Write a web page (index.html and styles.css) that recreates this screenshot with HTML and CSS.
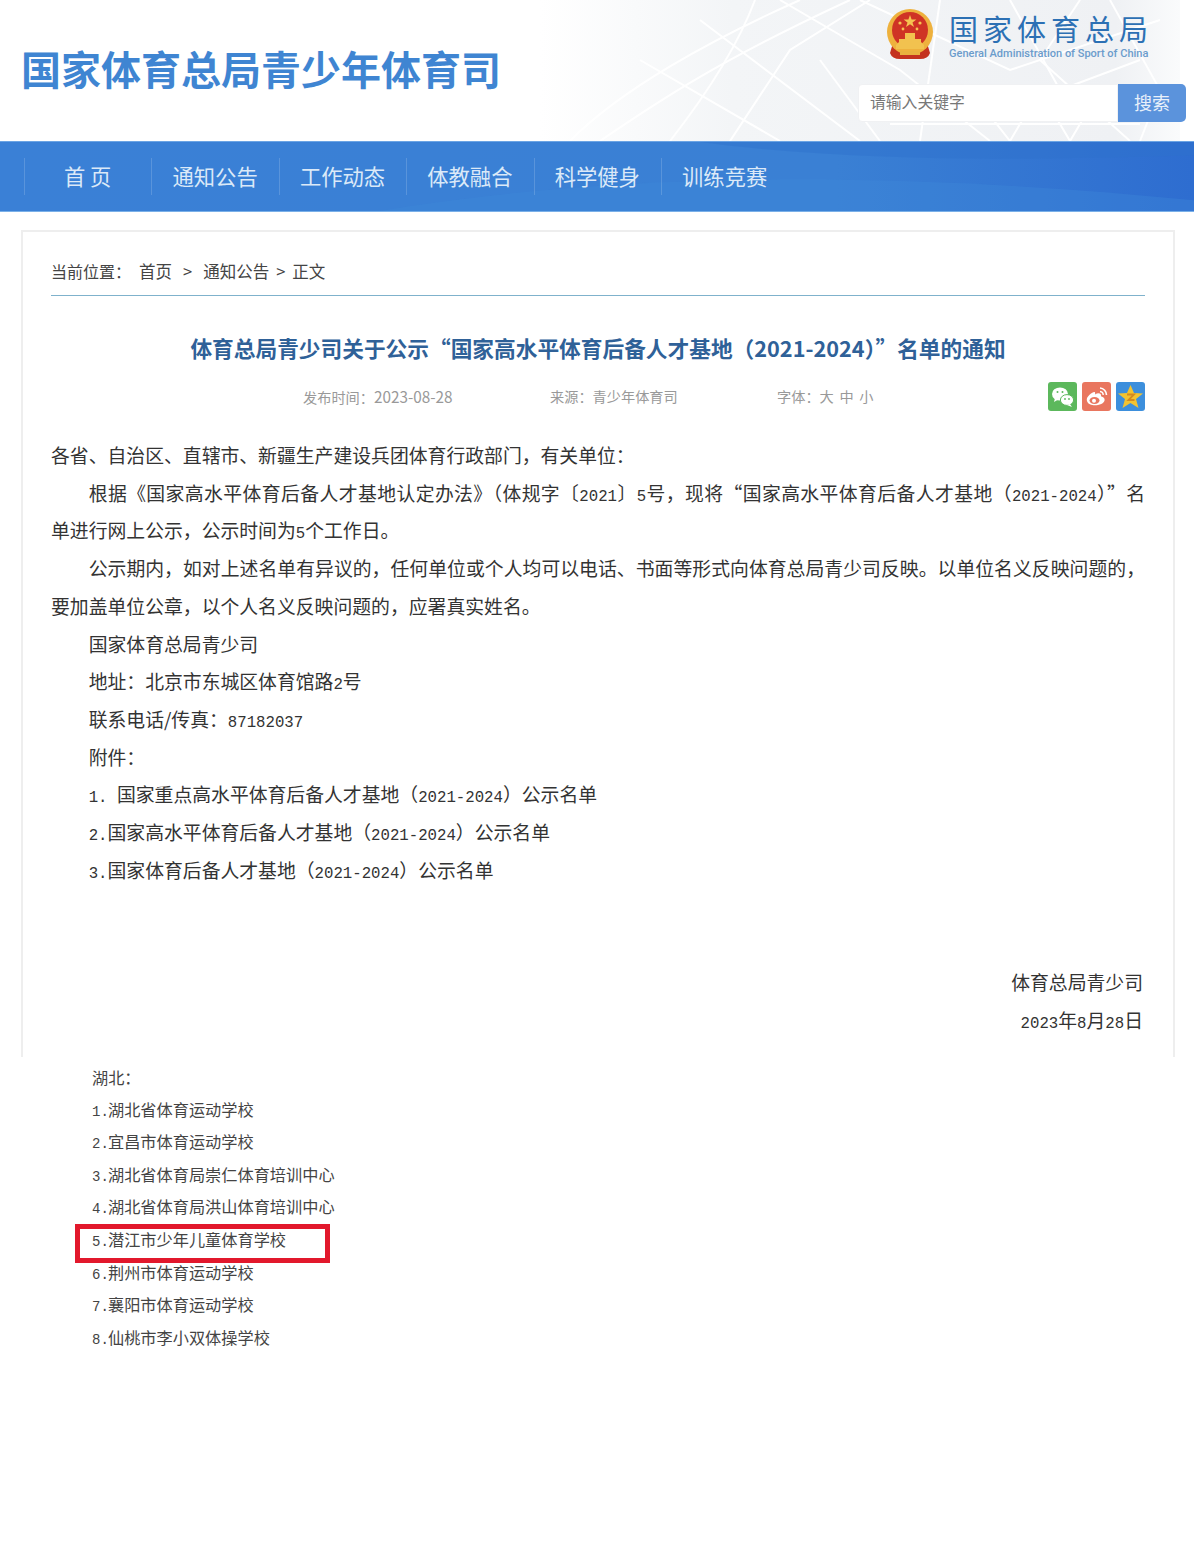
FILE: index.html
```html
<!DOCTYPE html>
<html lang="zh-CN">
<head>
    <meta charset="UTF-8">
    <meta name="viewport" content="width=device-width, initial-scale=1.0">
    <title>国家体育总局青少年体育司</title>
    <link rel="stylesheet" href="styles.css">
</head>
<body>
    <header class="header">
        <svg class="header-bg" viewBox="0 0 640 141" width="640" height="141" aria-hidden="true">
            <defs>
                <linearGradient id="fade" x1="0" x2="1" y1="0" y2="0">
                    <stop offset="0" stop-color="#f3f5f7" stop-opacity="0"/>
                    <stop offset="0.3" stop-color="#f3f5f7"/>
                    <stop offset="0.9" stop-color="#eff1f4"/>
                    <stop offset="1" stop-color="#fafbfc"/>
                </linearGradient>
            </defs>
            <rect width="640" height="141" fill="url(#fade)"/>
            <g fill="none" stroke="#fff" stroke-width="2">
                <path d="M30 141 C80 90 170 40 260 0"/>
                <path d="M60 141 C120 100 180 60 310 0"/>
                <path d="M130 141 C170 90 200 40 215 0"/>
                <path d="M190 141 L250 50 L330 0"/>
                <path d="M100 60 L240 141"/>
                <path d="M160 20 L320 141"/>
                <path d="M240 0 L360 70 L450 141"/>
                <path d="M280 60 L340 141"/>
                <path d="M400 0 L380 141"/>
                <path d="M430 90 L470 141 L500 90 L530 141 L560 90"/>
                <path d="M470 0 L520 90 L600 60"/>
                <path d="M540 0 L500 60 L590 141"/>
                <path d="M570 0 L620 90 L600 141"/>
                <path d="M320 0 L470 70 L620 20"/>
                <path d="M350 124 L600 124"/>
            </g>
        </svg>
        <h1 class="site-title">国家体育总局青少年体育司</h1>
        <div class="header-right">
            <div class="brand">
                <svg class="emblem" viewBox="0 0 48 50" width="48" height="50" aria-hidden="true">
                    <path d="M7 34 L4 44 Q6 50 14 50 L34 50 Q42 50 44 44 L41 34 Z" fill="#c4321f"/>
                    <circle cx="24" cy="23" r="23" fill="#eeb13d"/>
                    <circle cx="24" cy="21" r="18" fill="#cf3325"/>
                    <path d="M24 6 l1.6 4.6 4.8 0 -3.9 2.9 1.5 4.6 -4-2.8 -4 2.8 1.5-4.6 -3.9-2.9 4.8 0z" fill="#f5c451"/>
                    <circle cx="14" cy="14" r="1.6" fill="#f5c451"/>
                    <circle cx="34" cy="14" r="1.6" fill="#f5c451"/>
                    <circle cx="17" cy="20" r="1.4" fill="#f5c451"/>
                    <circle cx="31" cy="20" r="1.4" fill="#f5c451"/>
                    <path d="M13 30 L35 30 L35 33 L38 36 L38 40 L10 40 L10 36 L13 33 Z" fill="#f2c24f"/>
                    <path d="M19 24 H29 V30 H19 Z" fill="#f2c24f"/>
                    <path d="M14 42 H34 V46 H14 Z" fill="#e9b13f"/>
                </svg>
                <div class="brand-text">
                    <div class="brand-cn">国家体育总局</div>
                    <div class="brand-en">General Administration of Sport of China</div>
                </div>
            </div>
            <form class="search">
                <div class="search-input">请输入关键字</div>
                <div class="search-btn">搜索</div>
            </form>
        </div>
    </header>

    <nav class="nav">
        <svg class="nav-bg" viewBox="0 0 1194 71" width="1194" height="69" preserveAspectRatio="none" aria-hidden="true">
            <path d="M380 71 C620 30 900 30 1194 60 V71 Z" fill="#3f8ada" opacity="0.35"/>
            <path d="M700 0 C860 22 1040 18 1194 14 V0 Z" fill="#2f72cc" opacity="0.45"/>
        </svg>
        <a class="nav-item">首&nbsp;页</a>
        <a class="nav-item">通知公告</a>
        <a class="nav-item">工作动态</a>
        <a class="nav-item">体教融合</a>
        <a class="nav-item">科学健身</a>
        <a class="nav-item">训练竞赛</a>
    </nav>

    <main class="card">
        <div class="crumb">
            <span class="crumb-label">当前位置&#xFF1A;</span>
            <span>首页</span>
            <span class="crumb-arrow">&gt;</span>
            <span>通知公告</span>
            <span class="crumb-arrow tight">&gt;</span>
            <span>正文</span>
        </div>
        <h2 class="article-title">体育总局青少司关于公示&#x201C;国家高水平体育后备人才基地&#xFF08;2021-2024&#xFF09;&#x201D;名单的通知</h2>
        <div class="meta">
            <span class="meta-date">发布时间&#xFF1A;<span class="meta-num">2023-08-28</span></span>
            <span class="meta-source">来源&#xFF1A;青少年体育司</span>
            <span class="meta-font">字体&#xFF1A;大 中 小</span>
            <div class="share">
                <svg class="share-icon" viewBox="0 0 29 29" aria-hidden="true">
                    <rect width="29" height="29" rx="3" fill="#5cb85c"/>
                    <ellipse cx="12" cy="12" rx="8" ry="6.6" fill="#fff"/>
                    <path d="M7 16 L6 20 L11 17 Z" fill="#fff"/>
                    <ellipse cx="19" cy="18" rx="6.6" ry="5.4" stroke="#5cb85c" fill="#fff"/>
                    <path d="M22 22 L24 25 L19 23 Z" fill="#fff"/>
                    <circle cx="9.5" cy="10" r="1" fill="#5cb85c"/>
                    <circle cx="14.5" cy="10" r="1" fill="#5cb85c"/>
                    <circle cx="17" cy="17" r="0.9" fill="#5cb85c"/>
                    <circle cx="21" cy="17" r="0.9" fill="#5cb85c"/>
                </svg>
                <svg class="share-icon" viewBox="0 0 29 29" aria-hidden="true">
                    <rect width="29" height="29" rx="3" fill="#e9765f"/>
                    <path d="M12 10 C7 12 4 16 5 19 C6 23 12 24 16 23 C21 22 24 19 22 16 C21 14.500 19 15 19 14 C19.500 11 16 10.500 13 12.500 C13.500 10.500 13 10 12 10 Z" fill="#fff"/>
                    <ellipse cx="12.500" cy="18.500" rx="5" ry="3.500" fill="#e9765f"/>
                    <circle cx="12" cy="18.800" r="2" fill="#fff"/>
                    <path d="M18 6 A7 7 0 0 1 24.500 13" fill="none" stroke="#fff" stroke-width="1.600"/>
                    <path d="M18 9.500 A3.500 3.500 0 0 1 21.200 13" fill="none" stroke="#fff" stroke-width="1.400"/>
                </svg>
                <svg class="share-icon" viewBox="0 0 29 29" aria-hidden="true">
                    <rect width="29" height="29" rx="3" fill="#3d8fdc"/>
                    <path d="M14.500 3 L18 11 L27 11.500 L20 17 L22.500 26 L14.500 21 L6.500 26 L9 17 L2 11.500 L11 11 Z" fill="#f3c331"/>
                    <path d="M11 12.500 H18 L12.500 18 H18.500" fill="none" stroke="#d58a1f" stroke-width="1.800"/>
                </svg>
            </div>
        </div>
        <div class="content">
            <p class="flush">各省、自治区、直辖市、新疆生产建设兵团体育行政部门&#xFF0C;有关单位&#xFF1A;</p>
            <p class="fit">根据《国家高水平体育后备人才基地认定办法》&#xFF08;体规字〔<span class="num">2021</span>〕<span class="num">5</span>号&#xFF0C;现将&#x201C;国家高水平体育后备人才基地&#xFF08;<span class="num">2021-2024</span>&#xFF09;&#x201D;名</p>
            <p class="flush">单进行网上公示&#xFF0C;公示时间为<span class="num">5</span>个工作日。</p>
            <p>公示期内&#xFF0C;如对上述名单有异议的&#xFF0C;任何单位或个人均可以电话、书面等形式向体育总局青少司反映。以单位名义反映问题的&#xFF0C;要加盖单位公章&#xFF0C;以个人名义反映问题的&#xFF0C;应署真实姓名。</p>
            <p>国家体育总局青少司</p>
            <p>地址&#xFF1A;北京市东城区体育馆路<span class="num">2</span>号</p>
            <p>联系电话/传真&#xFF1A;<span class="num">87182037</span></p>
            <p>附件&#xFF1A;</p>
            <p><span class="num">1. </span> 国家重点高水平体育后备人才基地&#xFF08;<span class="num">2021-2024</span>&#xFF09;公示名单</p>
            <p><span class="num">2.</span>国家高水平体育后备人才基地&#xFF08;<span class="num">2021-2024</span>&#xFF09;公示名单</p>
            <p><span class="num">3.</span>国家体育后备人才基地&#xFF08;<span class="num">2021-2024</span>&#xFF09;公示名单</p>
            <p class="sign sign-first">体育总局青少司</p>
            <p class="sign"><span class="num">2023</span>年<span class="num">8</span>月<span class="num">28</span>日</p>
        </div>
    </main>

    <ul class="school-list">
        <li>湖北&#xFF1A;</li>
        <li><span class="idx">1.</span>湖北省体育运动学校</li>
        <li><span class="idx">2.</span>宜昌市体育运动学校</li>
        <li><span class="idx">3.</span>湖北省体育局崇仁体育培训中心</li>
        <li><span class="idx">4.</span>湖北省体育局洪山体育培训中心</li>
        <li class="marked"><span class="idx">5.</span>潜江市少年儿童体育学校<span class="red-box"></span></li>
        <li><span class="idx">6.</span>荆州市体育运动学校</li>
        <li><span class="idx">7.</span>襄阳市体育运动学校</li>
        <li><span class="idx">8.</span>仙桃市李小双体操学校</li>
    </ul>
</body>
</html>
```

FILE: styles.css
```css
* {
    box-sizing: border-box;
}
body {
    margin: 0;
    width: 1200px;
    height: 1564px;
    overflow: hidden;
    background: white;
    color: #333;
    font-family: "Noto Sans CJK SC", "Liberation Sans", sans-serif;
}

/* header */
.header {
    position: relative;
    height: 141px;
    display: flex;
    justify-content: space-between;
    padding: 0 14px 0 21px;
}
.header-bg {
    position: absolute;
    top: 0;
    left: 540px;
}
.site-title {
    position: relative;
    margin: 43px 0 0;
    font-size: 40px;
    line-height: 50px;
    font-weight: 700;
    color: #3f85d2;
}
.header-right {
    position: relative;
    width: 328px;
}
.brand {
    display: flex;
    gap: 15px;
    margin: 9px 0 0 28px;
}
.brand-cn {
    font-size: 29px;
    line-height: 36px;
    letter-spacing: 5px;
    color: #2c70b4;
    margin-top: 1px;
}
.brand-en {
    font-family: Roboto, "Liberation Sans", sans-serif;
    font-size: 11px;
    font-weight: 500;
    line-height: 13px;
    color: #6b9ccc;
    white-space: nowrap;
    margin-top: 1px;
}
.search {
    display: flex;
    margin-top: 24px;
    height: 38px;
}
.search-input {
    width: 260px;
    background: white;
    border: 1px solid #f0f1f3;
    border-radius: 4px 0 0 4px;
    padding-left: 11px;
    font-size: 15.800px;
    line-height: 34px;
    color: #777;
}
.search-btn {
    width: 68px;
    background: #5b93dc;
    border-radius: 0 5px 5px 0;
    text-align: center;
    font-size: 18px;
    line-height: 36px;
    color: #e8f0fa;
}

/* nav */
.nav {
    position: relative;
    width: 1194px;
    height: 71px;
    display: flex;
    align-items: center;
    padding-left: 24px;
    background: linear-gradient(90deg, #3a80d6 0%, #3a80d4 70%, #2e6dd0 100%);
    border-top: 1px solid #6ba4e4;
    border-bottom: 1px solid #7ab0e8;
}
.nav-bg {
    position: absolute;
    top: 0;
    left: 0;
}
.nav-item {
    position: relative;
    width: 127.400px;
    height: 37px;
    padding-right: 1px;
    line-height: 35px;
    text-align: center;
    font-size: 21.300px;
    color: #dbe9f8;
    border-left: 1px solid rgba(255, 255, 255, 0.16);
}
.nav-item:first-child {
    border-left-color: rgba(255, 255, 255, 0.1);
}

/* article card */
.card {
    margin: 18px 25px 0 21px;
    height: 827px;
    padding: 0 28px;
    border: 2px solid #eee;
    border-bottom: none;
}
.crumb {
    display: flex;
    height: 64px;
    padding-top: 28px;
    border-bottom: 1px solid #7fb2cc;
    font-size: 16.500px;
    line-height: 22px;
    color: #444;
}
.crumb-label {
    font-size: 16px;
    margin-right: 8px;
}
.crumb-arrow {
    margin: 0 11px;
}
.crumb-arrow.tight {
    margin: 0 7px;
}
.article-title {
    margin: 34px 0 0;
    text-align: center;
    font-size: 21.700px;
    line-height: 36px;
    font-weight: 700;
    color: #2f6198;
    white-space: nowrap;
}
.meta {
    display: flex;
    align-items: center;
    height: 29px;
    margin-top: 15px;
    font-size: 14.200px;
    color: #999;
}
.meta-date {
    margin-left: 252px;
    width: 247px;
}
.meta-num {
    font-size: 15.300px;
}
.meta-source {
    width: 227px;
}
.meta-font {
    word-spacing: 2.500px;
}
.share {
    margin: 2px 0 0 auto;
    display: flex;
    gap: 5px;
}
.share-icon {
    display: block;
    width: 29px;
    height: 29px;
}
.content {
    margin-top: 26px;
    font-size: 18.830px;
    line-height: 37.700px;
    color: #333;
}
.content p {
    margin: 0;
    text-indent: 2em;
    text-align: justify;
}
.content p.flush {
    text-indent: 0;
}
.content p.fit {
    text-align-last: justify;
}
.content p.sign {
    text-align: right;
    text-indent: 0;
    padding-right: 2px;
}
.content p.sign-first {
    margin-top: 75px;
}
.num {
    font-family: "Liberation Mono", monospace;
    font-size: 15.700px;
    line-height: 1;
}

/* list under the card */
.school-list {
    list-style: none;
    margin: 3px 0 0;
    padding: 0 0 0 92px;
    font-size: 16.200px;
    line-height: 32.600px;
    color: #444;
}
.school-list li {
    position: relative;
    height: 32.600px;
}
.school-list li:first-child {
    top: 1px;
}
.idx {
    display: inline-block;
    width: 16px;
    font-family: "Liberation Mono", monospace;
    font-size: 14px;
    line-height: 1;
}
.red-box {
    position: absolute;
    left: -17px;
    top: 1px;
    width: 255px;
    height: 39px;
    border: 5px solid #e2182c;
}
```
